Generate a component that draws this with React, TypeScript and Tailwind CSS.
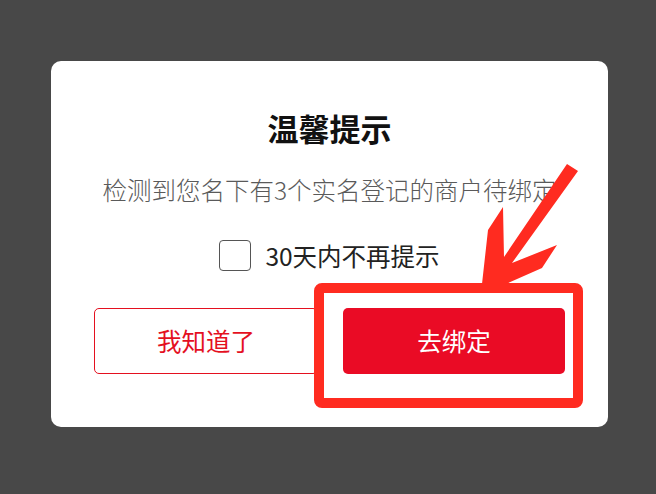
import React from "react";

export default function App() {
  return (
    <div
      className="relative w-[656px] h-[494px] bg-[#484848] pt-[61px] pl-[51px] overflow-hidden"
      style={{ fontFamily: '"Noto Sans CJK SC", "Noto Sans", sans-serif' }}
    >
      <div className="w-[557px] h-[366px] bg-white rounded-[10px] flex flex-col items-center pt-[47px]">
        <div className="h-[40px] leading-[40px] text-[31px] font-bold text-[#111111]">温馨提示</div>
        <div className="mt-[25px] h-[34px] leading-[34px] text-[24.5px] font-light text-[#5a5a5a] whitespace-nowrap">
          检测到您名下有3个实名登记的商户待绑定
        </div>
        <div className="mt-[33px] h-[31px] flex items-center gap-[14px]">
          <div className="w-[32px] h-[31px] border-[1.5px] border-[#555555] rounded-[4px] bg-white" />
          <span className="text-[24.5px] leading-[31px] text-[#222222]">30天内不再提示</span>
        </div>
        <div className="mt-[37px] w-full px-[43px] flex gap-[25px]">
          <div className="flex-1 h-[66px] border border-[#e4101f] rounded-[5px] flex items-center justify-center text-[24.5px] text-[#e4101f]">
            我知道了
          </div>
          <div className="flex-1 h-[66px] bg-[#ea0b25] rounded-[5px] flex items-center justify-center text-[24.5px] text-white">
            去绑定
          </div>
        </div>
      </div>

      <svg
        className="absolute left-0 top-0 pointer-events-none"
        width="656"
        height="494"
        viewBox="0 0 656 494"
      >
        <rect x="319" y="288" width="259" height="115" rx="3" fill="none" stroke="#ff2b20" strokeWidth="10" />
        <polygon
          fill="#ff2b20"
          points="567,164 578,171 512,263 557,245 542,268 506,284 482,284 488,230 503,207 504,257"
        />
      </svg>
    </div>
  );
}
